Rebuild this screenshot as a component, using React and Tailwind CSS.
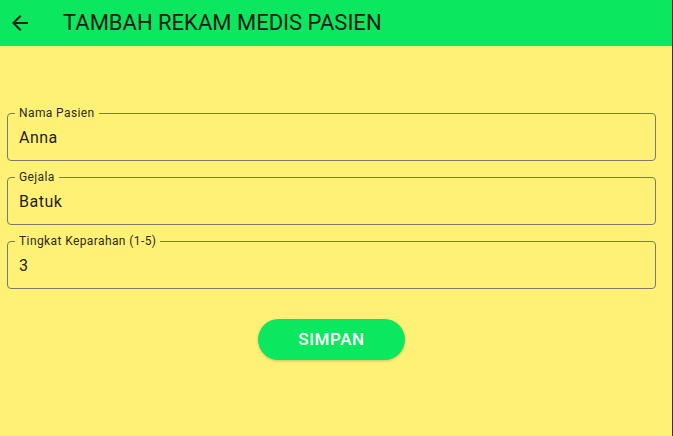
import React from 'react';

function Field({ label, value }) {
  return (
    <div className="relative flex h-[48px] items-center rounded-[4px] border border-[#7a7a6e] px-[11px]">
      <span className="absolute left-[7px] top-[-8px] bg-[#fff176] px-[4px] text-[12px] leading-[14px] tracking-[0.4px] text-[#2b2b2b]">
        {label}
      </span>
      <span className="pt-[1px] text-[16px] leading-[20px] tracking-[0.5px] text-[#1f1f1f]">{value}</span>
    </div>
  );
}

export default function App() {
  return (
    <div className="flex h-[436px] w-[673px] font-['Roboto',sans-serif]">
      <div className="flex flex-1 flex-col bg-[#fff176]">
        {/* App bar */}
        <div className="flex h-[46px] items-center bg-[#0be75e]">
          <div className="flex w-[63px] items-center pl-[8px]">
            <svg width="24" height="24" viewBox="0 0 24 24" className="text-[#1c1c1c]">
              <path d="M20 11H7.83l5.59-5.59L12 4l-8 8 8 8 1.41-1.41L7.83 13H20v-2z" fill="currentColor" />
            </svg>
          </div>
          <h1 className="text-[22px] leading-none text-[#1c1c1c]">TAMBAH REKAM MEDIS PASIEN</h1>
        </div>

        {/* Form */}
        <div className="flex flex-col gap-[16px] pl-[7px] pr-[16px] pt-[67px]">
          <Field label="Nama Pasien" value="Anna" />
          <Field label="Gejala" value="Batuk" />
          <Field label="Tingkat Keparahan (1-5)" value="3" />
        </div>

        <div className="flex justify-center pt-[30px]">
          <button className="ml-[-9px] h-[41px] w-[147px] rounded-full bg-[#0be75e] text-[17px] font-medium tracking-[0.6px] text-white shadow-[0_1px_3px_rgba(0,0,0,0.2)]">
            SIMPAN
          </button>
        </div>
      </div>
      <div className="w-[1px] bg-[#333333]" />
    </div>
  );
}
